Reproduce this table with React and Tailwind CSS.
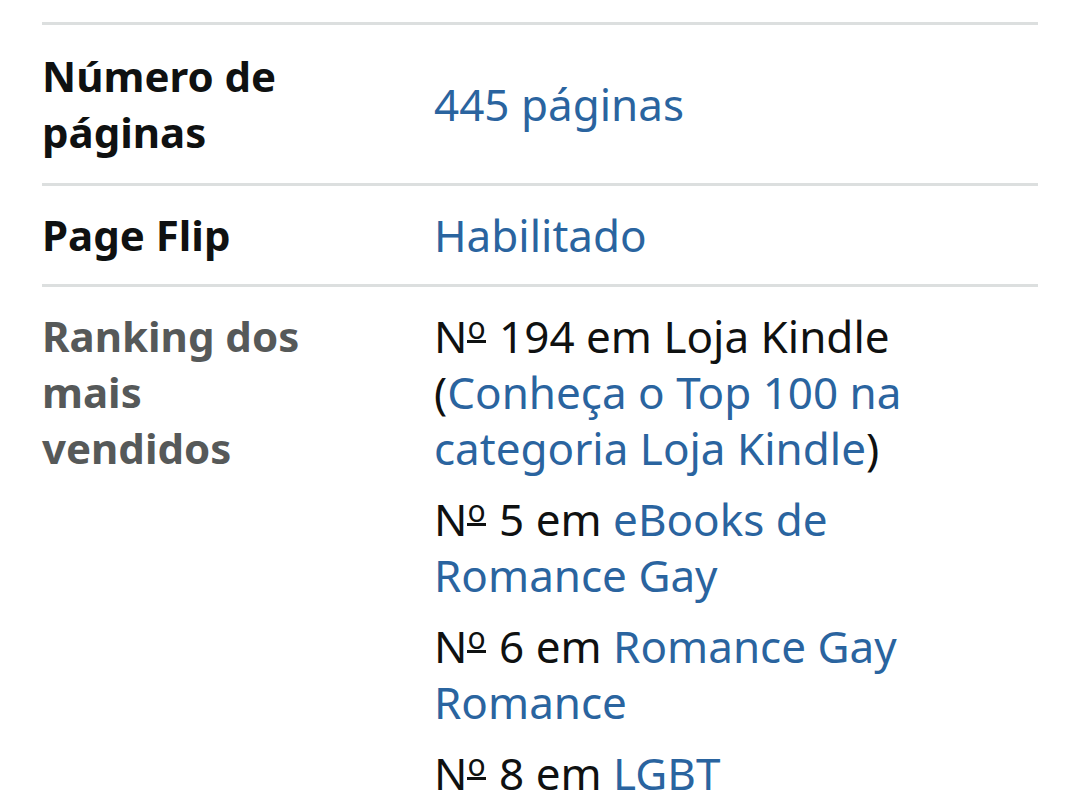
import React from 'react';

const Link = ({ children }) => <span className="text-[#2a649f]">{children}</span>;

const No = () => (
  <>
    N<span className="inline-block border-b-[3px] border-[#0f1111] leading-[22px] align-[14px] text-[30px] pb-[1px] mr-[2px]">o</span>
  </>
);

const ranks = [
  { n: '5', label: 'eBooks de Romance Gay' },
  { n: '6', label: 'Romance Gay Romance' },
  { n: '8', label: 'LGBT' },
];

export default function App() {
  return (
    <div className="h-[809px] overflow-hidden bg-white pt-[22px] px-[42px] text-[44px] leading-[56px] text-[#0f1111] font-['Noto_Sans',sans-serif]">
      <div className="border-t-[3px] border-[#dcdfdf]">
        <div className="grid grid-cols-[392px_1fr] items-center py-[23px] border-b-[3px] border-[#dcdfdf]">
          <div className="font-bold text-[42px]">Número de<br />páginas</div>
          <div><Link>445 páginas</Link></div>
        </div>
        <div className="grid grid-cols-[392px_1fr] items-center py-[21px] border-b-[3px] border-[#dcdfdf]">
          <div className="font-bold text-[42px]">Page Flip</div>
          <div><Link>Habilitado</Link></div>
        </div>
        <div className="grid grid-cols-[392px_1fr] items-start py-[21px]">
          <div className="font-bold text-[42px] text-[#565959]">Ranking dos<br />mais<br />vendidos</div>
          <div className="pr-[70px]">
            <div>
              <No /> 194 em Loja Kindle (<Link>Conheça o Top 100 na categoria Loja Kindle</Link>)
            </div>
            {ranks.map((r) => (
              <div key={r.n} className="mt-[15px]">
                <No /> {r.n} em <Link>{r.label}</Link>
              </div>
            ))}
          </div>
        </div>
      </div>
    </div>
  );
}
